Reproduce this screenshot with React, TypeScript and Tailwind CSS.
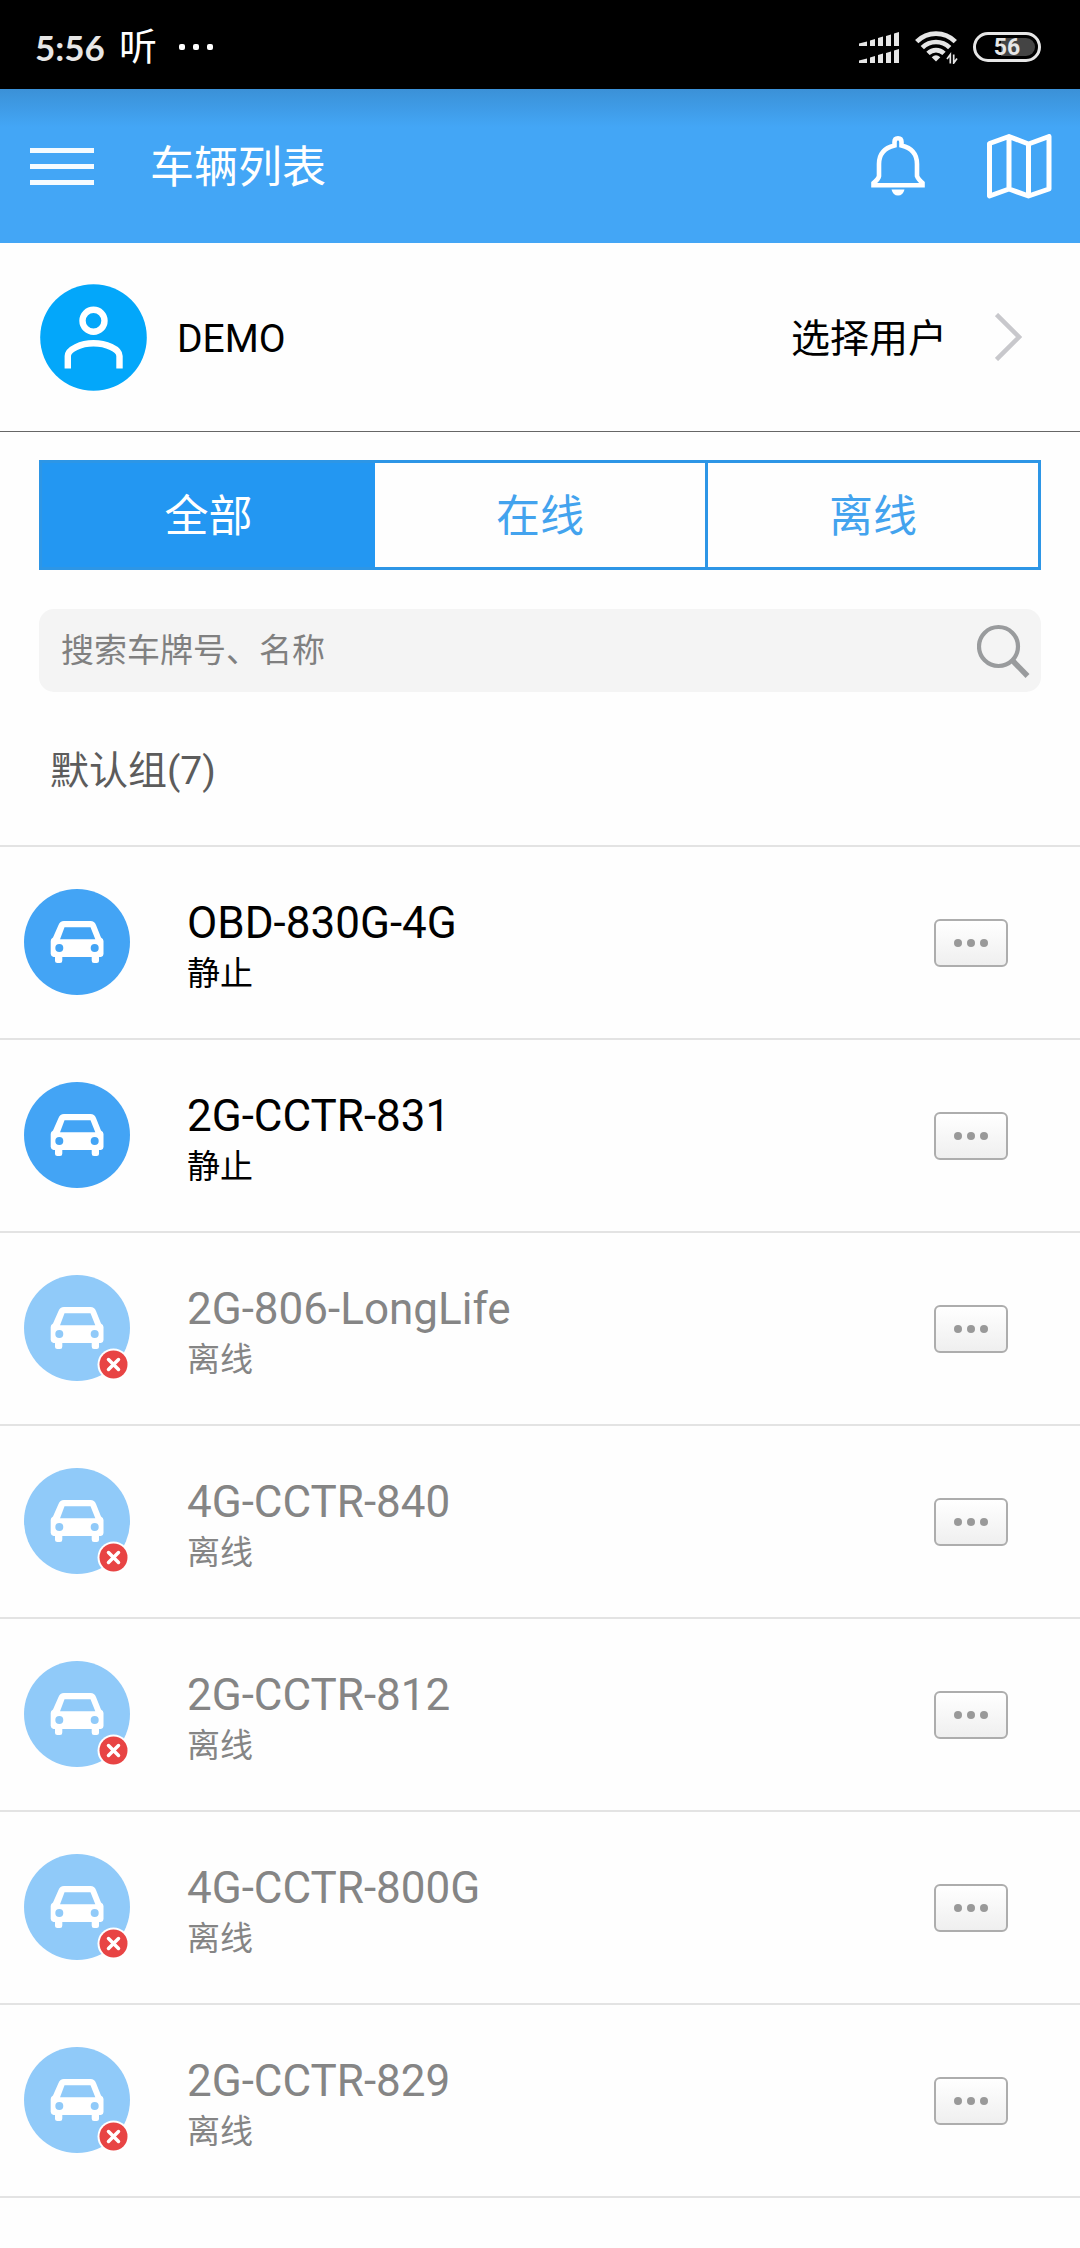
const TABS = ["全部", "在线", "离线"];

const VEHICLES = [
  { name: "OBD-830G-4G", status: "静止", online: true },
  { name: "2G-CCTR-831", status: "静止", online: true },
  { name: "2G-806-LongLife", status: "离线", online: false },
  { name: "4G-CCTR-840", status: "离线", online: false },
  { name: "2G-CCTR-812", status: "离线", online: false },
  { name: "4G-CCTR-800G", status: "离线", online: false },
  { name: "2G-CCTR-829", status: "离线", online: false },
];

function SignalIcon() {
  return (
    <svg width="40" height="31" viewBox="859 32 40 31" fill="#e6e6e6">
      <path d="M859 43.5 L867 41.5 V46 H859Z M870 40.5 L875 39 V46 H870Z M878 38 L883 36.5 V46 H878Z M886 36 L891 34.5 V46 H886Z M894 33.5 L899 32 V46 H894Z" />
      <path d="M859 60.5 L867 58.5 V63 H859Z M870 57.5 L875 56 V63 H870Z M878 55 L883 53.5 V63 H878Z M886 53 L891 51.5 V63 H886Z M894 50.5 L899 49 V63 H894Z" />
    </svg>
  );
}

function WifiIcon() {
  return (
    <svg width="43" height="33" viewBox="0 0 43 33" fill="none" stroke="#e6e6e6" strokeWidth="4.7">
      <path d="M1.700 10.700 C12.500 0 29.500 0 40.300 10.700" />
      <path d="M7.300 16.700 C15 9.100 27 9.100 34.700 16.700" />
      <path d="M13 22.400 C17.600 17.900 24.400 17.900 29 22.400" />
      <path d="M16.700 26.300 Q21 22.300 25.300 26.300 L21 30.600Z" fill="#e6e6e6" stroke="none" />
      <path d="M35.300 32.500 V23.500 L32 28 M38.700 23.500 V32 L42 27.500" strokeWidth="1.700" />
    </svg>
  );
}

function BellIcon() {
  return (
    <svg width="54" height="60" viewBox="0 0 54 60" fill="none" stroke="white" strokeWidth="4.6">
      <path d="M23.500 9.500 V6 Q23.500 2.300 27 2.300 Q30.500 2.300 30.500 6 V9.500 C41 12 46 19 46 28 V40 Q47 43 51.500 47 V49.300 H2.500 V47 Q7.500 43 8 40 V28 C8 19 13 12 23.500 9.500Z" />
      <path d="M20.500 53.500 H33.500 Q32 59.500 27 59.500 Q22 59.500 20.500 53.500Z" fill="white" stroke="none" />
    </svg>
  );
}

function MapIcon() {
  return (
    <svg width="65" height="65" viewBox="0 0 65 65" fill="none" stroke="white" strokeWidth="5" strokeLinejoin="round">
      <path d="M2.500 9.500 L22 2.500 L41.500 10 L62 2.500 V55 L41.500 62 L22 55 L2.500 62Z M22 2.500 V55 M41.500 10 V62" />
    </svg>
  );
}

function AvatarIcon() {
  return (
    <svg width="107" height="107" viewBox="0 0 107 107" fill="none" stroke="white" strokeWidth="6.4">
      <circle cx="53.500" cy="53.500" r="53.300" fill="#03a7fa" stroke="none" />
      <circle cx="53.500" cy="36.700" r="11" />
      <path d="M27.800 84.500 V72 C28 65 41 59.300 53.500 59.300 C66 59.300 79.500 65 79.500 72 V84.500" />
    </svg>
  );
}

function VehicleIcon({ online }: { online: boolean }) {
  const color = online ? "#43a4f5" : "#90caf9";
  return (
    <svg width="106" height="112" viewBox="0 0 106 112">
      <circle cx="53" cy="53" r="53" fill={color} />
      <path
        fill="white"
        d="M40 32 H66.500 Q70.500 32 72 36 L77 48.500 Q79.500 49.500 79.500 52 V65 Q79.500 67.500 77 68 H75 V71.500 Q75 74 72.500 74 H70 Q67.700 74 67.700 71.500 V68 H38.300 V71.500 Q38.300 74 36 74 H33.500 Q31 74 31 71.500 V68 H29.500 Q27 67.500 26.700 65 V52 Q26.700 49.500 29 48.500 L34.500 36 Q36 32 40 32Z"
      />
      <path fill={color} d="M40.500 38.300 H66.500 L71.300 50.300 H36Z" />
      <circle cx="35.300" cy="59" r="4" fill={color} />
      <circle cx="70.700" cy="59" r="4" fill={color} />
      {!online && (
        <g>
          <circle cx="89.500" cy="89.500" r="16" fill="white" />
          <circle cx="89.500" cy="89.500" r="14" fill="#e84444" />
          <path d="M84.500 84.500 L94.500 94.500 M94.500 84.500 L84.500 94.500" stroke="white" strokeWidth="3.500" strokeLinecap="round" />
        </g>
      )}
    </svg>
  );
}

export default function App() {
  return (
    <div className="flex h-[2248px] w-[1080px] flex-col overflow-hidden bg-[#fefefe] font-[Roboto,'Noto_Sans_CJK_SC',sans-serif] text-black">
      {/* Status bar */}
      <div className="flex h-[89px] shrink-0 items-center bg-black pl-[35px] pr-[39px] pt-[5px] text-[#e6e6e6]">
        <span className="font-[Lato,sans-serif] text-[35px] font-bold leading-none">5:56</span>
        <span className="ml-[14px] text-[38px] leading-none text-white">听</span>
        <div className="ml-[22px] flex gap-[8px]">
          <i className="h-[6px] w-[6px] rounded-[2px] bg-white" />
          <i className="h-[6px] w-[6px] rounded-[2px] bg-white" />
          <i className="h-[6px] w-[6px] rounded-[2px] bg-white" />
        </div>
        <div className="ml-auto flex items-center">
          <SignalIcon />
          <div className="ml-[16px]">
            <WifiIcon />
          </div>
          <div className="ml-[15px] flex h-[30px] w-[68px] rounded-full border-[3px] border-[#e6e6e6] p-[3px]">
            <div className="flex w-full items-center justify-center rounded-full bg-linear-to-r from-black from-40% to-[#444] to-40% text-[23px] font-bold leading-none">
              56
            </div>
          </div>
        </div>
      </div>

      {/* App bar */}
      <header className="flex h-[154px] shrink-0 items-center bg-linear-to-b from-[#3b91d7] to-[#43a6f6] to-[38px] pl-[30px] pr-[28px] text-white">
        <div className="flex w-16 flex-col gap-[11px]">
          <i className="h-[5px] bg-white/95" />
          <i className="h-[5px] bg-white/95" />
          <i className="h-[5px] bg-white/95" />
        </div>
        <h1 className="ml-[56px] mt-[3px] text-[44px] leading-none">车辆列表</h1>
        <div className="ml-auto flex items-center gap-[62px]">
          <BellIcon />
          <MapIcon />
        </div>
      </header>

      {/* Current user */}
      <section className="flex h-[189px] shrink-0 items-center border-b border-[#666] pl-[40px] pr-[58px] text-[39px]">
        <AvatarIcon />
        <span className="ml-[30px] mt-[4px] leading-none">DEMO</span>
        <span className="ml-auto mt-[4px] leading-none">选择用户</span>
        <svg className="ml-[48px]" width="27" height="48" viewBox="0 0 27 48" fill="none" stroke="#c8c8cc" strokeWidth="4.5">
          <path d="M1.500 1.500 L24 24 L1.500 46.500" />
        </svg>
      </section>

      {/* Filter tabs */}
      <div className="mx-[39px] mt-[28px] flex h-[110px] shrink-0 border-[3px] border-[#2d96e6] text-[44px] text-[#43a3ee]">
        {TABS.map((tab, i) => (
          <button
            key={tab}
            className={
              i === 0
                ? "w-[333px] bg-[#2397f2] pt-[4px] text-white"
                : i === 1
                  ? "w-[330px] pt-[4px]"
                  : "w-[333px] border-l-[3px] border-[#2d96e6] pt-[4px]"
            }
          >
            {tab}
          </button>
        ))}
      </div>

      {/* Search */}
      <div className="mx-[39px] mt-[39px] flex h-[83px] shrink-0 items-center justify-between rounded-[15px] bg-[#f4f4f4] pl-[22px] pr-[10px]">
        <span className="text-[33px] leading-none text-[#808080]">搜索车牌号、名称</span>
        <svg width="54" height="54" viewBox="0 0 54 54" fill="none" stroke="#999b9d">
          <circle cx="21.500" cy="22.500" r="19.500" strokeWidth="4.200" />
          <path d="M36 37 L50.500 52" strokeWidth="5.500" />
        </svg>
      </div>

      <h2 className="flex h-[155px] shrink-0 items-center border-b-2 border-[#e3e3e3] pl-[50px] pt-[6px] text-[39px] text-[#5c5c5c]">
        默认组(7)
      </h2>

      {/* Vehicle list */}
      <ul>
        {VEHICLES.map((v) => (
          <li key={v.name} className="flex h-[193px] items-start border-b-2 border-[#e3e3e3] pl-[24px] pr-[72px]">
            <div className="mt-[42px]">
              <VehicleIcon online={v.online} />
            </div>
            <div className={v.online ? "ml-[57px] mt-[50px]" : "ml-[57px] mt-[50px] text-[#858585]"}>
              <p className="text-[44px] leading-[52px]">{v.name}</p>
              <p className="text-[33px] leading-[50px]">{v.status}</p>
            </div>
            <button className="ml-auto mt-[72px] flex h-[48px] w-[74px] items-center justify-center gap-[5px] rounded-[6px] border-2 border-[#adadad] bg-linear-to-b from-white to-[#efefef]">
              <i className="h-[8px] w-[8px] rounded-full bg-[#999]" />
              <i className="h-[8px] w-[8px] rounded-full bg-[#999]" />
              <i className="h-[8px] w-[8px] rounded-full bg-[#999]" />
            </button>
          </li>
        ))}
      </ul>
    </div>
  );
}
